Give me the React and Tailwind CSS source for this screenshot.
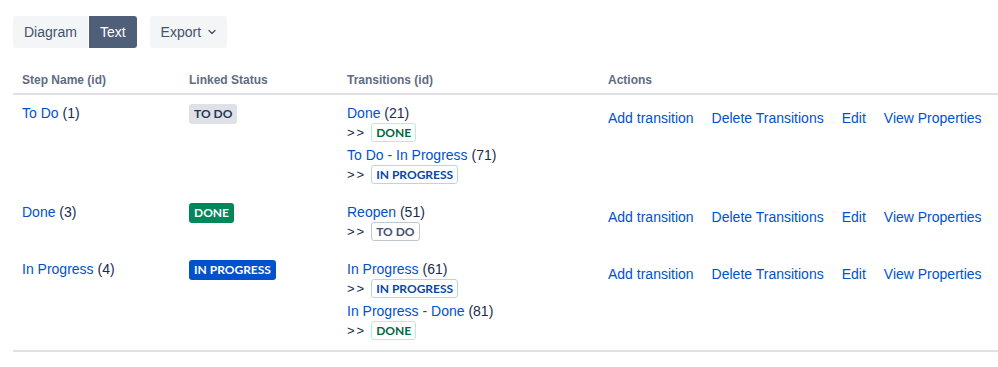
import { ChevronDown } from "lucide-react";

const steps = [
  {
    name: "To Do",
    id: 1,
    status: "todo",
    transitions: [
      { name: "Done", id: 21, to: "done" },
      { name: "To Do - In Progress", id: 71, to: "progress" },
    ],
  },
  {
    name: "Done",
    id: 3,
    status: "done",
    transitions: [{ name: "Reopen", id: 51, to: "todo" }],
  },
  {
    name: "In Progress",
    id: 4,
    status: "progress",
    transitions: [
      { name: "In Progress", id: 61, to: "progress" },
      { name: "In Progress - Done", id: 81, to: "done" },
    ],
  },
];

const labels = { todo: "TO DO", done: "DONE", progress: "IN PROGRESS" };

const solid = {
  todo: "bg-[#dfe1e6] text-[#253858]",
  done: "bg-[#00875a] text-white",
  progress: "bg-[#0052cc] text-white",
};

const outline = {
  todo: "border-[#c1c7d0] text-[#42526e]",
  done: "border-[#abf5d1] text-[#006644]",
  progress: "border-[#b3d4ff] text-[#0747a6]",
};

const lozengeFont = { fontFamily: "Lato, 'Liberation Sans', sans-serif" };

function Lozenge({ status }) {
  return (
    <span
      className={`inline-block rounded-[3px] px-[5px] text-[12px] leading-[20px] font-bold ${solid[status]}`}
      style={lozengeFont}
    >
      {labels[status]}
    </span>
  );
}

function OutlineLozenge({ status }) {
  return (
    <span
      className={`inline-block rounded-[3px] border px-[4px] text-[12px] leading-[17px] font-bold ${outline[status]}`}
      style={lozengeFont}
    >
      {labels[status]}
    </span>
  );
}

function App() {
  return (
    <div
      className="min-h-screen bg-white pl-[13px] pt-[16px] text-[14px] text-[#172b4d]"
      style={{ fontFamily: '"Liberation Sans", Arial, sans-serif' }}
    >
      {/* toolbar */}
      <div className="flex items-center">
        <div className="flex gap-px">
          <button className="h-[32px] rounded-l-[3px] bg-[#f4f5f7] px-[11px] text-[#42526e]">
            Diagram
          </button>
          <button className="h-[32px] rounded-r-[3px] bg-[#505f79] px-[11px] text-white">
            Text
          </button>
        </div>
        <button className="ml-[13px] flex h-[32px] items-center gap-[5px] rounded-[3px] bg-[#f4f5f7] pl-[11px] pr-[9px] text-[#42526e]">
          Export
          <ChevronDown size={12} strokeWidth={2.5} />
        </button>
      </div>

      {/* workflow table */}
      <table className="mt-[15px] w-full table-fixed border-collapse">
        <colgroup>
          <col className="w-[167px]" />
          <col className="w-[157px]" />
          <col className="w-[261px]" />
          <col />
        </colgroup>
        <thead>
          <tr className="border-b-2 border-[#dfe1e6] text-left text-[12px] font-bold text-[#5e6c84]">
            <th className="px-[9px] pt-[9px] pb-[5px] leading-[16px]">Step Name (id)</th>
            <th className="px-[9px] pt-[9px] pb-[5px] leading-[16px]">Linked Status</th>
            <th className="px-[10px] pt-[9px] pb-[5px] leading-[16px]">Transitions (id)</th>
            <th className="px-[10px] pt-[9px] pb-[5px] leading-[16px]">Actions</th>
          </tr>
        </thead>
        <tbody className="border-b-2 border-[#dfe1e6]">
          {steps.map((s) => (
            <tr key={s.id} className="align-top">
              <td className="px-[9px] pt-[8px] pb-[7px] leading-[20px]">
                <a className="text-[#0052cc]">{s.name}</a> ({s.id})
              </td>
              <td className="px-[9px] pt-[8px] pb-[7px] leading-[20px]">
                <Lozenge status={s.status} />
              </td>
              <td className="px-[10px] pt-[8px] pb-[7px] leading-[20px]">
                {s.transitions.map((t) => (
                  <div key={t.id} className="h-[42px]">
                    <div className="h-[20px]">
                      <a className="text-[#0052cc]">{t.name}</a> ({t.id})
                    </div>
                    <div className="flex h-[19px] items-center gap-[5px]">
                      <span className="text-[13px] tracking-[2px]">&gt;&gt;</span>
                      <OutlineLozenge status={t.to} />
                    </div>
                  </div>
                ))}
              </td>
              <td className="px-[10px] pt-[7px] pb-[7px]">
                <div className="flex gap-[18px] leading-[32px] text-[#0052cc]">
                  <a>Add transition</a>
                  <a>Delete Transitions</a>
                  <a>Edit</a>
                  <a>View Properties</a>
                </div>
              </td>
            </tr>
          ))}
        </tbody>
      </table>
    </div>
  );
}

export default App;
